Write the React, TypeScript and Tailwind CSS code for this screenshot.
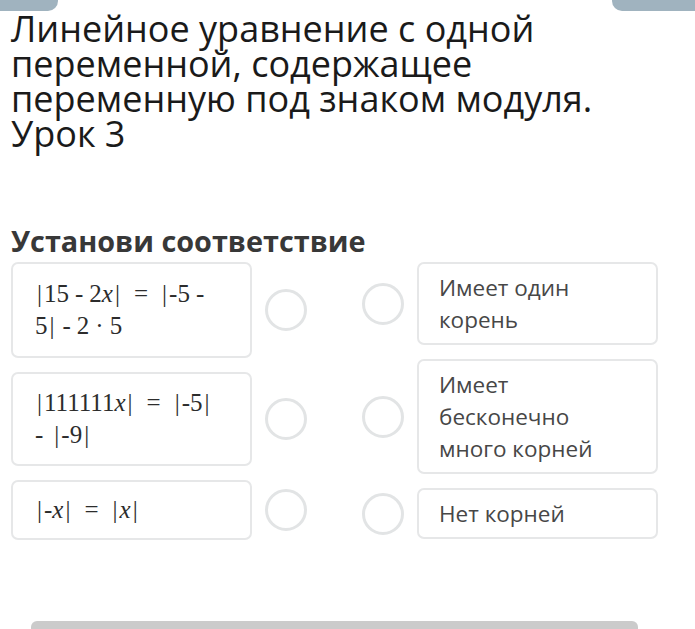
import React from "react";

const Bar = () => <span className="mx-[2px]">|</span>;
const Rel = () => <span className="mx-[12px]">=</span>;
const Bin = ({ s = "-" }: { s?: string }) => <span className="mx-[6px]">{s}</span>;
const X = () => <i>x</i>;

const leftItems = [
  {
    pad: "py-[14px]",
    lines: [
      <>
        <Bar />15<Bin />2<X /><Bar /><Rel /><Bar />-5<Bin />
      </>,
      <>
        5<Bar /><Bin />2<Bin s="·" />5
      </>,
    ],
  },
  {
    pad: "py-[13px]",
    lines: [
      <>
        <Bar />111111<X /><Bar /><Rel /><Bar />-5<Bar />
      </>,
      <>
        -<span className="ml-[9px]" /><Bar />-9<Bar />
      </>,
    ],
  },
  {
    pad: "py-[12px]",
    lines: [
      <>
        <Bar />-<X /><Bar /><Rel /><Bar /><X /><Bar />
      </>,
    ],
  },
];

const rightLines: string[][] = [
  ["Имеет один", "корень"],
  ["Имеет", "бесконечно", "много корней"],
  ["Нет корней"],
];

const Circle = () => (
  <div className="w-[42px] h-[42px] shrink-0 rounded-full border-[3px] border-[#e2e4e5] bg-white" />
);

const App = () => {
  return (
    <div className="w-[695px] h-[629px] bg-white relative overflow-hidden font-['Open_Sans',sans-serif]">
      <div className="flex justify-between h-[11px]">
        <div className="w-[58px] h-full bg-[#a0b3bf] rounded-br-[10px]" />
        <div className="w-[83px] h-full bg-[#a0b3bf] rounded-bl-[10px]" />
      </div>

      <h1 className="pl-[11px] text-[36px] leading-[35px] text-[#1a1a1a] font-normal">
        Линейное уравнение с одной
        <br />
        переменной, содержащее
        <br />
        переменную под знаком модуля.
        <br />
        Урок 3
      </h1>

      <h2 className="mt-[74px] pl-[11px] text-[28.8px] leading-[32px] font-bold text-[#383838]">
        Установи соответствие
      </h2>

      <div className="flex mt-[5px] pl-[11px]">
        <div className="flex flex-col gap-[14px]">
          {leftItems.map((item, i) => (
            <div key={i} className="flex items-center gap-[13px]">
              <div
                className={`w-[241px] border-2 border-[#e6e7e8] rounded-[7px] pl-[22px] pr-[8px] ${item.pad} font-['Liberation_Serif',serif] text-[25px] leading-[32px] text-[#2c2c2c] whitespace-nowrap`}
              >
                {item.lines.map((l, j) => (
                  <div key={j}>{l}</div>
                ))}
              </div>
              <Circle />
            </div>
          ))}
        </div>

        <div className="flex flex-col gap-[14px] ml-[55px]">
          {rightLines.map((lines, i) => (
            <div key={i} className="flex items-center gap-[13px]">
              <Circle />
              <div className="w-[241px] border-2 border-[#e6e7e8] rounded-[7px] pl-[20px] pr-[10px] py-[7.5px] text-[22.5px] leading-[32px] text-[#474747]">
                {lines.map((l, j) => (
                  <div key={j}>{l}</div>
                ))}
              </div>
            </div>
          ))}
        </div>
      </div>

      <div className="absolute left-[31px] bottom-0 w-[607px] h-[8px] bg-[#cbcbcb] rounded-t-[6px]" />
    </div>
  );
};

export default App;
